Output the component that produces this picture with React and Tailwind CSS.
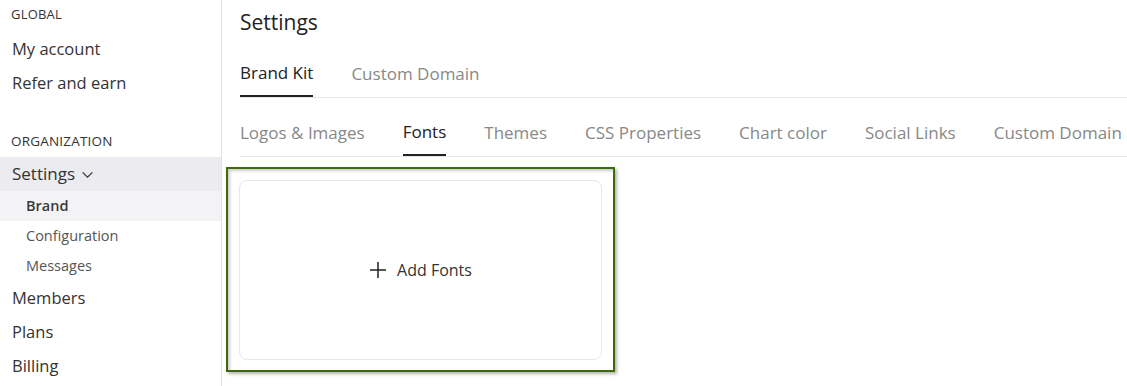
import React from "react";

const font = { fontFamily: '"Open Sans", "Noto Sans", sans-serif' };

function Chevron() {
  return (
    <svg width="13" height="13" viewBox="0 0 12 12" className="ml-[6px] mt-[1px]">
      <path d="M1.5 4 L6 8.5 L10.5 4" fill="none" stroke="#333" strokeWidth="1.1" />
    </svg>
  );
}

function Plus() {
  return (
    <svg width="18" height="18" viewBox="0 0 18 18">
      <path d="M9 1 V17 M1 9 H17" stroke="#222" strokeWidth="1.5" />
    </svg>
  );
}

export default function App() {
  const sub = ["Logos & Images", "Fonts", "Themes", "CSS Properties", "Chart color", "Social Links", "Custom Domain"];
  return (
    <div className="flex w-[1127px] h-[386px] overflow-hidden bg-white text-[#333]" style={font}>
      <aside className="w-[222px] shrink-0 border-r border-[#e3e3e3] flex flex-col">
        <div className="h-[30px] flex items-center pl-[11px] text-[13px] text-[#333] tracking-[0.2px]">GLOBAL</div>
        <div className="mt-[2px] h-[34px] flex items-center pl-[12px] text-[16.5px]">My account</div>
        <div className="h-[34px] flex items-center pl-[12px] text-[16.5px]">Refer and earn</div>
        <div className="mt-[26px] h-[31px] flex items-center pl-[11px] text-[13.5px] tracking-[0.2px]">ORGANIZATION</div>
        <div className="h-[34px] flex items-center pl-[12px] text-[17px] bg-[#ebebf0]">
          Settings
          <Chevron />
        </div>
        <div className="h-[30px] flex items-center pl-[26px] text-[14.5px] font-semibold text-[#3a3a3a] bg-[#f3f3f6]">Brand</div>
        <div className="h-[30px] flex items-center pl-[26px] text-[14.5px] text-[#555]">Configuration</div>
        <div className="h-[30px] flex items-center pl-[26px] text-[14.5px] text-[#555]">Messages</div>
        <div className="h-[34px] flex items-center pl-[12px] text-[16.5px]">Members</div>
        <div className="h-[34px] flex items-center pl-[12px] text-[16.5px]">Plans</div>
        <div className="h-[34px] flex items-center pl-[12px] text-[16.5px]">Billing</div>
      </aside>
      <main className="flex-1 min-w-0 pl-[18px] flex flex-col">
        <div className="h-[28px] mt-[9px] flex items-center text-[21px] text-[#222]">Settings</div>
        <div className="mt-[16px] flex gap-[38px] border-b border-[#e6e6e6] whitespace-nowrap">
          <div className="h-[44px] pb-[2px] flex items-center text-[17px] text-[#222] border-b-2 border-[#222] -mb-[1px]">Brand Kit</div>
          <div className="h-[44px] pb-[2px] flex items-center text-[17px] text-[#888]">Custom Domain</div>
        </div>
        <div className="mt-[14px] flex gap-[38px] border-b border-[#e6e6e6] whitespace-nowrap">
          {sub.map((t) =>
            t === "Fonts" ? (
              <div key={t} className="h-[44px] pb-[2px] flex items-center text-[17px] text-[#222] border-b-2 border-[#222] -mb-[1px]">{t}</div>
            ) : (
              <div key={t} className="h-[44px] pb-[2px] flex items-center text-[17px] text-[#888]">{t}</div>
            )
          )}
        </div>
        <div className="mt-[10px] ml-[-14px] w-[389px] h-[205px] border-2 border-[#3d6b0a] p-[11px] pb-[10px] shadow-[2px_2px_3px_rgba(0,0,0,0.3),inset_2px_2px_3px_rgba(0,0,0,0.2)]">
          <div className="w-full h-full rounded-[8px] border border-[#e8e8e8] flex items-center justify-center gap-[10px]">
            <Plus />
            <span className="text-[16px] text-[#333]">Add Fonts</span>
          </div>
        </div>
      </main>
    </div>
  );
}
